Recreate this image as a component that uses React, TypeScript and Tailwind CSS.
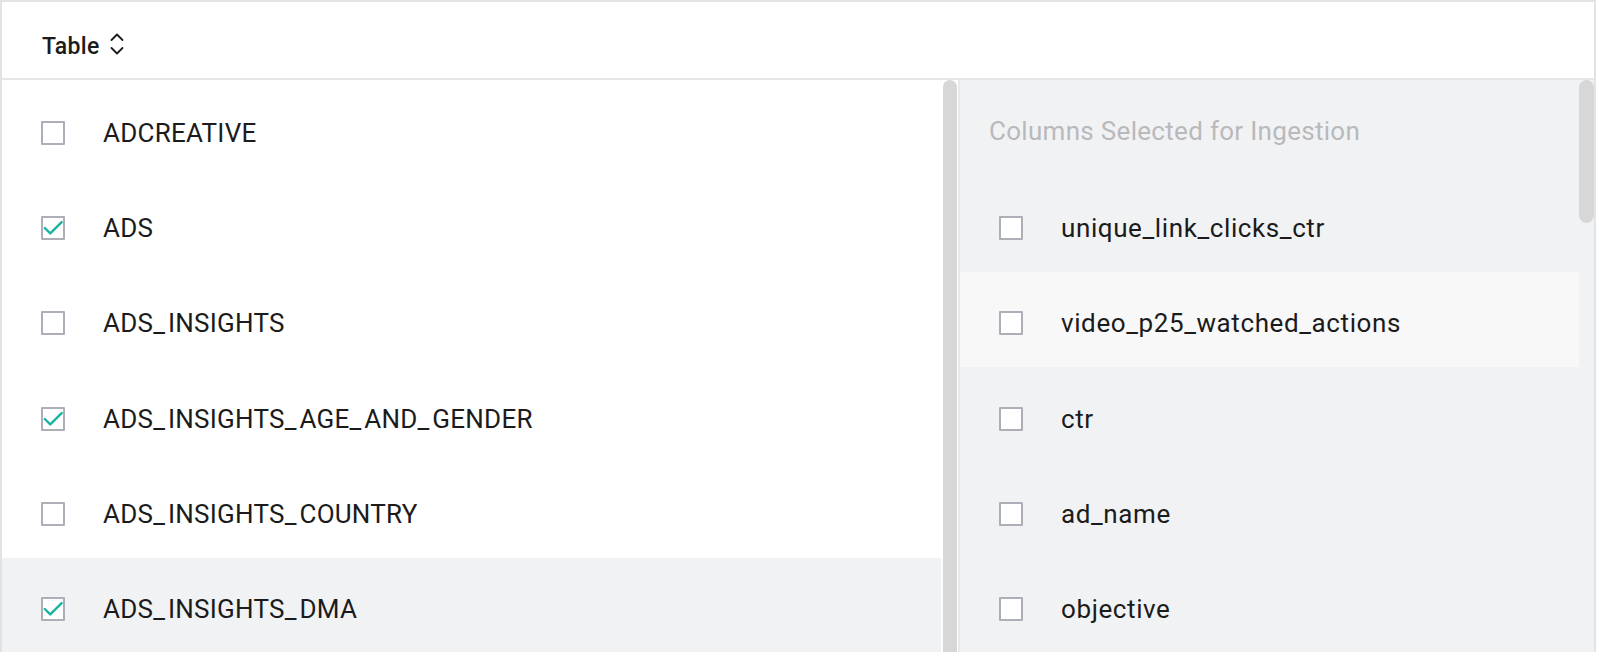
const tables = [
  { name: 'ADCREATIVE', checked: false },
  { name: 'ADS', checked: true },
  { name: 'ADS_INSIGHTS', checked: false },
  { name: 'ADS_INSIGHTS_AGE_AND_GENDER', checked: true },
  { name: 'ADS_INSIGHTS_COUNTRY', checked: false },
  { name: 'ADS_INSIGHTS_DMA', checked: true, active: true },
]

const columns = [
  { name: 'unique_link_clicks_ctr' },
  { name: 'video_p25_watched_actions', hover: true },
  { name: 'ctr' },
  { name: 'ad_name' },
  { name: 'objective' },
]

function Checkbox({ checked }: { checked?: boolean }) {
  return (
    <div className="w-[24px] h-[24px] shrink-0 border-2 border-[#aeaeb8] bg-white rounded-[1px] flex items-center justify-center">
      {checked && (
        <svg width="22" height="22" viewBox="0 0 22 22" fill="none">
          <path d="M2 11 L8 17 L20.5 4.5" stroke="#19b3a2" strokeWidth="2.6" strokeLinecap="round" strokeLinejoin="round" />
        </svg>
      )}
    </div>
  )
}

function SortIcon() {
  return (
    <svg width="14" height="22" viewBox="0 0 14 22" fill="none" className="ml-[10px] mt-[3px]">
      <path d="M1.5 7 L7 1.5 L12.5 7" stroke="#1c1c1c" strokeWidth="1.8" strokeLinecap="round" strokeLinejoin="round" />
      <path d="M1.5 15 L7 20.5 L12.5 15" stroke="#1c1c1c" strokeWidth="1.8" strokeLinecap="round" strokeLinejoin="round" />
    </svg>
  )
}

// table names: the underscores sit wider in the original face
function TableName({ name }: { name: string }) {
  const parts = name.split('_')
  return (
    <span className="ml-[38px] text-[26px] leading-none tracking-[0.25px]">
      {parts.map((p, i) => (
        <span key={i}>
          {p}
          {i < parts.length - 1 && <span className="tracking-[3px]">_</span>}
        </span>
      ))}
    </span>
  )
}

export default function App() {
  return (
    <div className="w-[1600px] h-[652px] bg-white overflow-hidden font-['Roboto','Liberation_Sans',sans-serif] text-[#1b1b1b]">
      <div className="w-[1596px] h-[680px] border-2 border-b-0 border-[#e3e3e3] flex flex-col">
        {/* header */}
        <div className="h-[78px] shrink-0 border-b-2 border-[#e6e6e6] flex items-start pt-[28px] pl-[40px]">
          <span className="text-[23px] font-medium tracking-[0.3px]">Table</span>
          <SortIcon />
        </div>

        <div className="flex flex-1 min-h-0">
          {/* tables list */}
          <div className="w-[939px] shrink-0 pt-[1px]">
            {tables.map((t) => (
              <div
                key={t.name}
                className={`h-[95.33px] flex items-center pt-[8px] pl-[39px] ${t.active ? 'bg-[#f1f2f4]' : ''}`}
              >
                <Checkbox checked={t.checked} />
                <TableName name={t.name} />
              </div>
            ))}
          </div>

          {/* left scrollbar */}
          <div className="w-[17px] shrink-0 bg-white">
            <div className="ml-[2px] w-[14px] h-[700px] rounded-full bg-[#d7d7d7]" />
          </div>

          {/* columns panel */}
          <div className="flex-1 flex border-l-2 border-[#e9e9ea] bg-[#f1f2f4]">
            <div className="w-[619px] shrink-0 pt-[1px]">
              <div className="h-[95.33px] flex items-center pt-[4px] pl-[29px]">
                <span className="text-[26px] leading-none tracking-[0.3px] text-[#b9b9bb]">Columns Selected for Ingestion</span>
              </div>
              {columns.map((c) => (
                <div
                  key={c.name}
                  className={`h-[95.33px] flex items-center pt-[8px] pl-[39px] ${c.hover ? 'bg-[#f8f8f9]' : ''}`}
                >
                  <Checkbox />
                  <span className="ml-[38px] text-[26px] leading-none tracking-[0.6px]">{c.name}</span>
                </div>
              ))}
            </div>
            <div className="w-[15px] shrink-0">
              <div className="w-[15px] h-[143px] rounded-full bg-[#d7d7d7]" />
            </div>
          </div>
        </div>
      </div>
    </div>
  )
}
